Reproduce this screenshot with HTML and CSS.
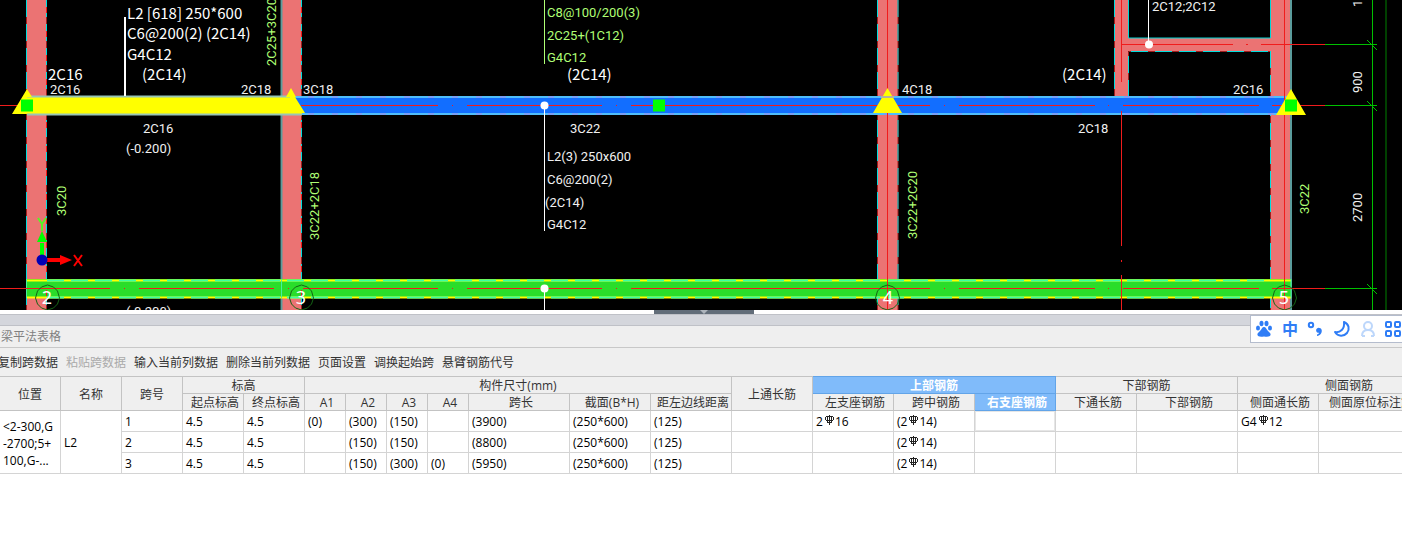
FILE: index.html
```html
<!DOCTYPE html>
<html lang="zh-CN">
<head>
<meta charset="utf-8">
<title>梁平法表格</title>
<link rel="stylesheet" href="styles.css">
</head>
<body>
<main class="app">
<svg class="canvas" viewBox="0 0 1402 310" role="img" aria-label="梁平面图">
  <defs>
    <symbol id="rebar" viewBox="0 0 10 10"><path d="M5.500 0v10M3.500 1v6M7.500 1v6M2 1.500h7M1.500 2v3M9.500 2v3M2 5.500h7M3 7.500h5" fill="none" stroke="#222" shape-rendering="crispEdges"/></symbol>
  </defs>
  <rect width="1402" height="310" fill="#000"/>
  <!-- columns of cross beams -->
  <g fill="#eb7373">
    <rect x="27" width="20" height="310"/><rect x="281" width="20" height="310"/>
    <rect x="878" width="20" height="310"/><rect x="1271" width="20" height="310"/>
    <rect x="1115" width="13" height="97"/><rect x="1115" y="38" width="156" height="13"/>
  </g>
  <g fill="none" stroke="#00d5d5">
    <path d="M281.500 0V310M1291 0V310" stroke="#5b9c9c" stroke-width="2"/>
    <path d="M1128.500 0V38H1270.500V0"/>
  </g>
  <g fill="none" stroke="#a02020">
    <path d="M26.500 0V310M46.500 0V310M301.500 0V310M877.500 0V310M898 0V310M1270.500 51V310M1114.500 0V97M1128.500 97V51.500H1270"/>
    <path d="M26.500 0V310M46.500 0V310M301.500 0V310M877.500 0V310M898 0V310M1270.500 51V310M1114.500 0V97M1128.500 97V51.500H1270" stroke="#00dede" stroke-dasharray="17 7"/>
  </g>
  <!-- blue span and yellow span -->
  <rect x="290" y="97" width="1001" height="17" fill="#126eff"/>
  <path d="M290 97H1291M290 114H1291" stroke="#7a9df5" stroke-width="2"/>
  <path d="M290 97H1291M290 114H1291" stroke="#24dfff" stroke-dasharray="18 6"/>
  <path d="M27 97H295L305 113H302V114H27z" fill="#ff0"/>
  <path d="M27 96.500H290M27 114.500H302" stroke="#98c5b5" stroke-width="2"/>
  <!-- green beam -->
  <rect x="26" y="279" width="1265" height="19" fill="#2add2a"/>
  <path d="M27 280.500H1291M27 297.500H1291" stroke="#ff0" stroke-width="2"/>
  <path d="M47 280.500H1271M47 297.500H1271" stroke="#3effa3" stroke-width="2" stroke-dasharray="17 7"/>
  <path d="M281.500 279V298M1291 279V298M26.500 279V298" stroke="#44f1a0"/>
  <!-- axes -->
  <g stroke="#f01c1c" fill="none">
    <path d="M0 105.500H27M301 105.500H438M452 105.500H453M467 105.500H602M616 105.500H617M631 105.500H930M944 105.500H945M959 105.500H1095M1108 105.500H1109M1123 105.500H1259M1272 105.500H1325"/>
    <path d="M0 288.500H110M124 288.500H125M139 288.500H274M288 288.500H289M303 288.500H438M452 288.500H453M467 288.500H602M616 288.500H617M631 288.500H930M944 288.500H945M959 288.500H1095M1108 288.500H1109M1123 288.500H1259M1272 288.500H1325"/>
    <path d="M1121 44.500H1233M1246 44.500H1248M1261 44.500H1325M887.500 0V310M1284.500 0V310M1121.500 0V82"/>
    <path d="M1121.500 111V246M1121.500 260V262M1121.500 275V310"/>
    <path d="M46.500 0V96M301.500 0V96M301.500 115V310M46.500 115V310" stroke-dasharray="6 18" stroke-dashoffset="-7"/>
  </g>
  <g fill="none" stroke="#00c000">
    <path d="M1325 44.500H1377M1325 105.500H1377M1325 288.500H1377M1372.500 0V310M1367 40l10 10M1367 101l10 10M1367 284l10 10"/>
    <path d="M1386 0V310" stroke="#004000" stroke-width="2"/>
  </g>
  <!-- supports and grips -->
  <path d="M27 89L12 114H27zM27 89l5 8h-5zM291 88l5 9h-10zM887.500 88l14.500 25h-29zM1291 89l15 26h-30z" fill="#ff0"/>
  <path d="M881 97H894" stroke="#b7b39c" stroke-width="2"/>
  <path d="M21 99.500h12v12H21zM653 99.500h12v12h-12zM1285 99.500h12v12h-12z" fill="#0f0"/>
  <g stroke="#fff" fill="none"><path d="M125 17V96" stroke-width="2"/><path d="M544.500 106V231M544.500 289V310M1148.500 0V44"/><path d="M544.500 0V64" stroke="#afff75"/></g>
  <g fill="#fff"><circle cx="544.500" cy="105.500" r="4"/><circle cx="544.500" cy="288.500" r="4"/><circle cx="1149" cy="44.500" r="4"/></g>
  <!-- grid bubbles -->
  <g fill="none" stroke="#146414">
    <path id="bubble" d="M35.500 298l2-7 4-4 6-2 6 2 4 4 2 7-2 6-4 4-6 2-6-2-4-4z"/>
    <use href="#bubble" x="254"/><use href="#bubble" x="840"/><use href="#bubble" x="1237"/>
  </g>
  <g class="axis-label" text-anchor="middle"><text x="47" y="304">2</text><text x="301" y="304">3</text><text x="888" y="304">4</text><text x="1284" y="304">5</text></g>
  <!-- coordinate mark -->
  <path d="M42 260V243" stroke="#0f0" stroke-width="4"/><path d="M42 231l5 11H37z" fill="#0f0"/>
  <path d="M43 260H62" stroke="#f00" stroke-width="4"/><path d="M72 260l-12-5v10z" fill="#f00"/>
  <circle cx="42" cy="260" r="5.500" fill="#0000b4"/>
  <path d="M38 218l4 6 4-6M42 224v7" fill="none" stroke="#55f525" stroke-width="2"/><path d="M74 255l8 11M82 255l-8 11" stroke="#f00" stroke-width="2"/>
  <!-- annotations -->
  <g class="note">
    <text x="127" y="19">L2 [618] 250*600</text><text x="127" y="39">C6@200(2) (2C14)</text><text x="127" y="60">G4C12</text>
    <text x="142" y="80">(2C14)</text><text x="48" y="80">2C16</text><text x="567" y="80">(2C14)</text><text x="1062" y="80">(2C14)</text>
  </g>
  <g class="cad">
    <text x="50" y="94">2C16</text><text x="241" y="94">2C18</text><text x="303" y="94">3C18</text><text x="143" y="133">2C16</text><text x="126" y="153">(-0.200)</text>
    <text x="902" y="94">4C18</text><text x="1233" y="94">2C16</text><text x="1078" y="133">2C18</text><text x="570" y="133">3C22</text>
    <text x="547" y="161">L2(3) 250x600</text><text x="547" y="184">C6@200(2)</text><text x="545" y="207">(2C14)</text><text x="547" y="229">G4C12</text>
    <text x="1152" y="11">2C12;2C12</text><text x="126" y="316">(-0.200)</text>
    <text transform="translate(1362 93) rotate(-90)">900</text><text transform="translate(1362 222) rotate(-90)">2700</text><text transform="translate(1362 7) rotate(-90)">1</text>
  </g>
  <g class="cad cad-green">
    <text x="547" y="17">C8@100/200(3)</text><text x="547" y="40">2C25+(1C12)</text><text x="547" y="62">G4C12</text>
    <text transform="translate(276 66) rotate(-90)">2C25+3C20</text><text transform="translate(66 216) rotate(-90)">3C20</text>
    <text transform="translate(319 240) rotate(-90)">3C22+2C18</text><text transform="translate(917 239) rotate(-90)">3C22+2C20</text><text transform="translate(1309 214) rotate(-90)">3C22</text>
  </g>
</svg>
<div class="splitter"><button class="handle" type="button" aria-label="收起面板"><svg width="8" height="4" viewBox="0 0 8 4"><path d="M0 0h8L4 4z" fill="#aeb5bd"/></svg></button></div>
<section class="panel">
  <div class="strip"></div>
  <h1 class="title">梁平法表格</h1>
  <div class="toolbar">
    <button type="button">复制跨数据</button><button type="button" disabled>粘贴跨数据</button><button type="button">输入当前列数据</button><button type="button">删除当前列数据</button><button type="button">页面设置</button><button type="button">调换起始跨</button><button type="button">悬臂钢筋代号</button>
  </div>
  <div class="ime">
    <button type="button" aria-label="百度输入法"><svg width="18" height="18" viewBox="0 0 18 18" fill="#2f7df6"><ellipse cx="3" cy="8" rx="2" ry="2.500"/><ellipse cx="6.500" cy="3.500" rx="2" ry="2.800"/><ellipse cx="11.500" cy="3.500" rx="2" ry="2.800"/><ellipse cx="15" cy="8" rx="2" ry="2.500"/><path d="M9 7c-2 0-2 2-4 4s-3 2.500-2.500 4 2 2 6.500 1.500c4.500.5 6 0 6.500-1.500s-.5-2-2.500-4-2-4-4-4z"/></svg></button>
    <button type="button" class="ime-cn">中</button>
    <button type="button" aria-label="标点"><svg width="18" height="18" viewBox="0 0 18 18"><circle cx="4" cy="5" r="2.200" fill="none" stroke="#2f7df6" stroke-width="2"/><path d="M12.500 8a2.500 2.500 0 1 0-.5 4.800c-.3 1-1 1.500-2 1.700v1.500c3.500-.5 4.800-3 4.800-5.300 0-1.500-1-2.700-2.300-2.700z" fill="#2f7df6"/></svg></button>
    <button type="button" aria-label="夜间模式"><svg width="18" height="18" viewBox="0 0 18 18"><path d="M11 2c5 2 6 7 3 11-3 3.500-9 4-12-1 5 1 10-3 9-10z" fill="none" stroke="#2f7df6" stroke-width="2" stroke-linejoin="round"/></svg></button>
    <button type="button" aria-label="用户"><svg width="18" height="18" viewBox="0 0 18 18" fill="none" stroke="#bdd7fb" stroke-width="2"><circle cx="9" cy="6" r="4"/><path d="M3 16c0-3.500 2-6 6-6s6 2.500 6 6M3 16h3M12 16h3"/></svg></button>
    <button type="button" aria-label="工具箱"><svg width="18" height="18" viewBox="0 0 18 18" fill="none" stroke="#2f7df6" stroke-width="2"><rect x="1" y="2" width="5" height="5" rx="1"/><rect x="10" y="2" width="5" height="5" rx="1"/><rect x="1" y="11" width="5" height="5" rx="1"/><rect x="10" y="11" width="5" height="5" rx="1"/></svg></button>
  </div>
  <div class="grid-wrap">
  <table class="grid">
    <colgroup><col class="w61"><col class="w61"><col class="w61"><col class="w61"><col class="w61"><col class="w41"><col class="w41"><col class="w41"><col class="w41"><col class="w101"><col class="w81"><col class="w81"><col class="w81"><col class="w81"><col class="w81"><col class="w81"><col class="w81"><col class="w101"><col class="w81"><col class="w101"><col class="w41"></colgroup>
    <thead>
      <tr><th rowspan="2">位置</th><th rowspan="2">名称</th><th rowspan="2">跨号</th><th colspan="2">标高</th><th colspan="7">构件尺寸(mm)</th><th rowspan="2">上通长筋</th><th colspan="3" class="active">上部钢筋</th><th colspan="2">下部钢筋</th><th colspan="3">侧面钢筋</th></tr>
      <tr class="sub"><th>起点标高</th><th>终点标高</th><th>A1</th><th>A2</th><th>A3</th><th>A4</th><th>跨长</th><th>截面(B*H)</th><th>距左边线距离</th><th>左支座钢筋</th><th>跨中钢筋</th><th class="active">右支座钢筋</th><th>下通长筋</th><th>下部钢筋</th><th>侧面通长筋</th><th>侧面原位标注筋</th><th></th></tr>
    </thead>
    <tbody>
      <tr><td rowspan="3" class="place">&lt;2-300,G<br>-2700;5+<br>100,G-...</td><td rowspan="3">L2</td><td>1</td><td>4.5</td><td>4.5</td><td>(0)</td><td>(300)</td><td>(150)</td><td></td><td>(3900)</td><td>(250*600)</td><td>(125)</td><td></td><td>2<svg class="bar"><use href="#rebar"/></svg>16</td><td>(2<svg class="bar"><use href="#rebar"/></svg>14)</td><td class="selected"></td><td></td><td></td><td>G4<svg class="bar"><use href="#rebar"/></svg>12</td><td></td><td></td></tr>
      <tr><td>2</td><td>4.5</td><td>4.5</td><td></td><td>(150)</td><td>(150)</td><td></td><td>(8800)</td><td>(250*600)</td><td>(125)</td><td></td><td></td><td>(2<svg class="bar"><use href="#rebar"/></svg>14)</td><td></td><td></td><td></td><td></td><td></td><td></td></tr>
      <tr><td>3</td><td>4.5</td><td>4.5</td><td></td><td>(150)</td><td>(300)</td><td>(0)</td><td>(5950)</td><td>(250*600)</td><td>(125)</td><td></td><td></td><td>(2<svg class="bar"><use href="#rebar"/></svg>14)</td><td></td><td></td><td></td><td></td><td></td><td></td></tr>
    </tbody>
  </table>
  </div>
</section>
</main>
</body>
</html>
```

FILE: styles.css
```css
* { box-sizing: border-box; }
body { margin: 0; background: #fff; overflow: hidden; font-family: "Open Sans", "Noto Sans CJK SC", sans-serif; font-size: 12px; color: #333; }
button { border: 0; background: none; padding: 0; font: inherit; color: inherit; }
.app { display: flex; flex-direction: column; }
.canvas { display: block; width: 100%; height: auto; }
.note { font-family: "Noto Sans CJK SC", sans-serif; font-size: 15px; fill: #fff; }
.cad { font-family: Roboto, sans-serif; font-size: 13px; fill: #f0f0f0; }
.cad-green { fill: #afff75; }
.axis-label { font-family: "Noto Sans", sans-serif; font-size: 18px; fill: #fff; }
.splitter { display: flex; justify-content: center; height: 4px; background: #fff; padding-left: 6px; }
.handle { display: flex; justify-content: center; width: 100px; height: 4px; background: #626d79; }
.panel { position: relative; background: #efefef; }
.strip { height: 12px; background: #d4d6dc; border-top: 1px solid #bfc1c7; border-bottom: 1px solid #bfc1c7; }
.title { margin: 0; height: 22px; padding-left: 1px; line-height: 21px; font-size: 12px; font-weight: 400; color: #808080; border-bottom: 1px solid #c8c8c8; }
.toolbar { display: flex; align-items: center; gap: 8px; height: 28px; margin-left: -2px; }
.toolbar button { white-space: nowrap; }
.toolbar button:disabled { color: #aaa; }
.ime { position: absolute; top: 1px; right: -10px; display: flex; align-items: center; gap: 8px; height: 28px; padding: 0 8px 0 4px; background: #fff; border: 1px solid #b4bccd; }
.ime button { display: flex; justify-content: center; width: 18px; }
.ime .ime-cn { color: #2f7df6; font-size: 16px; font-weight: 700; line-height: 20px; }
.grid-wrap { overflow: hidden; background: #fff; }
.grid { table-layout: fixed; border-collapse: collapse; width: 1461px; margin-left: -1px; }
.w41 { width: 41px; }
.w61 { width: 61px; }
.w81 { width: 81px; }
.w101 { width: 101px; }
.grid th, .grid td { border: 1px solid #d4d4d4; padding: 0; white-space: nowrap; }
.grid th { height: 17px; padding-top: 2px; line-height: 14px; border-color: #c3c3c3; background: #efefef; font-weight: 400; text-align: center; }
.grid .sub th { padding-left: 4px; }
.grid th.active { background: #80bbfa; border-color: #62a4e8; color: #fff; font-weight: 700; }
.grid td { height: 21px; padding: 2px 0 0 3px; line-height: 16px; color: #000; }
.grid .place { line-height: 17px; }
.grid .selected { box-shadow: inset 0 0 0 1px #e6e6e6; }
.bar { width: 10px; height: 10px; margin: 0 1px; vertical-align: 1px; }
```
